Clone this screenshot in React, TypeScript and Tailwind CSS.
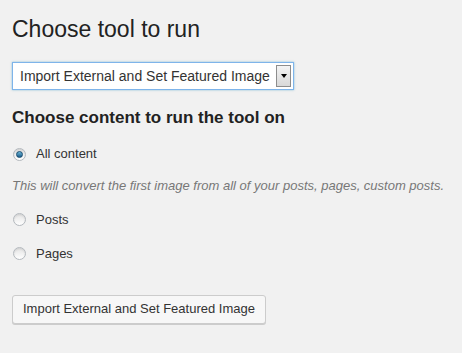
import React, { useState } from "react";

const options = [
  { id: "all", label: "All content" },
  { id: "posts", label: "Posts" },
  { id: "pages", label: "Pages" },
];

const Radio: React.FC<{ checked: boolean }> = ({ checked }) => (
  <span className="flex h-[13px] w-[13px] items-center justify-center rounded-full border border-[#b4b9be] bg-gradient-to-b from-[#e4e4e4] to-[#ffffff] shadow-[inset_0_1px_2px_rgba(0,0,0,0.1)]">
    {checked && (
      <span className="h-[7px] w-[7px] rounded-full bg-gradient-to-b from-[#6bb6d8] to-[#1b5f8c] border border-[#164a6e]" />
    )}
  </span>
);

const App: React.FC = () => {
  const [selected, setSelected] = useState("all");

  return (
    <div className="min-h-[353px] w-[462px] bg-[#f1f1f1] px-3 pt-[14px] font-['Liberation_Sans',Arial,sans-serif] text-[#222]">
      <h1 className="text-[23px] leading-[30px]">Choose tool to run</h1>

      <div className="mt-[18px] flex h-[28px] w-[282px] items-center border border-[#7eb4ea] bg-white pl-[7px] pr-[2px] shadow-[0_0_2px_rgba(30,140,190,0.5)]">
        <span className="flex-1 text-[14px] text-[#333]">
          Import External and Set Featured Image
        </span>
        <span className="flex h-[22px] w-[15px] items-center justify-center border border-[#8d8d8d] bg-gradient-to-b from-[#f4f4f4] to-[#d8d8d8]">
          <span className="h-0 w-0 border-x-[3px] border-t-[4px] border-x-transparent border-t-black" />
        </span>
      </div>

      <h2 className="mt-[16px] text-[17px] font-bold leading-[24px]">
        Choose content to run the tool on
      </h2>

      <div className="mt-[14px] flex flex-col">
        {options.map((o, i) => (
          <div key={o.id}>
            <label
              className="flex h-[20px] cursor-pointer items-center gap-[10px] pl-[1px] text-[13px] text-[#333]"
              onClick={() => setSelected(o.id)}
            >
              <Radio checked={selected === o.id} />
              {o.label}
            </label>
            {i === 0 ? (
              <p className="mt-[12px] mb-[14px] whitespace-nowrap text-[13px] italic text-[#777]">
                This will convert the first image from all of your posts, pages, custom posts.
              </p>
            ) : (
              <div className="h-[14px]" />
            )}
          </div>
        ))}
      </div>

      <button className="mt-[17px] h-[29px] rounded-[3px] border border-[#ccc] bg-[#f7f7f7] px-[10px] text-[13px] text-[#333] shadow-[0_1px_0_#ccc]">
        Import External and Set Featured Image
      </button>
    </div>
  );
};

export default App;
